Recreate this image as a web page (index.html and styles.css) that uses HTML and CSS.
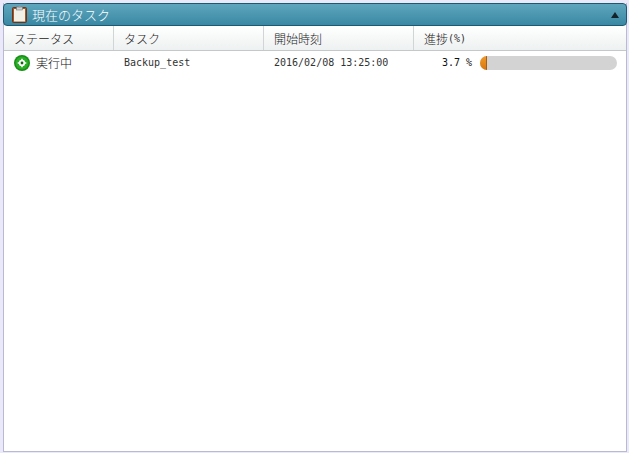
FILE: index.html
```html
<!DOCTYPE html>
<html lang="ja">
<head>
<meta charset="utf-8">
<title>現在のタスク</title>
<link rel="stylesheet" href="styles.css">
</head>
<body>
<div class="panel">
  <div class="titlebar">
    <svg class="clip" width="15" height="17" viewBox="0 0 15 17">
      <rect x="0.5" y="1.5" width="14" height="15" rx="1" fill="#a0582c" stroke="#6b3518"/>
      <rect x="2" y="3" width="11" height="12.5" fill="#f2f1e8"/>
      <rect x="4.5" y="1" width="6" height="3" fill="#cfd2d2" stroke="#666" stroke-width="0.5"/>
      <rect x="6.5" y="0" width="2" height="1.5" fill="#999"/>
    </svg>
    <span class="title">現在のタスク</span>
    <span class="collapse"></span>
  </div>
  <div class="head">
    <div class="hcell c1">ステータス</div>
    <div class="hcell c2">タスク</div>
    <div class="hcell c3">開始時刻</div>
    <div class="hcell c4">進捗<span class="mono">(%)</span></div>
  </div>
  <div class="row">
    <div class="cell c1 status">
      <svg width="16" height="16" viewBox="0 0 16 16">
        <circle cx="8" cy="8" r="8" fill="#178f17"/>
        <circle cx="8" cy="8" r="6.5" fill="#2aae25"/>
        <circle cx="8" cy="8" r="3.1" fill="#fff"/>
        <path d="M7.2 3.7h1.6v8.6H7.2zM3.7 7.2h8.6v1.6H3.7z" fill="#fff"/>
        <path d="M5.1 6.2l1.1-1.1 4.7 4.7-1.1 1.1zM9.8 5.1l1.1 1.1-4.7 4.7-1.1-1.1z" fill="#fff"/>
        <circle cx="8" cy="8" r="1.4" fill="#0f6a0f"/>
      </svg>
      <span>実行中</span>
    </div>
    <div class="cell c2 mono">Backup_test</div>
    <div class="cell c3 mono">2016/02/08 13:25:00</div>
    <div class="cell c4 progress">
      <span class="mono pct">3.7 %</span>
      <div class="track"><div class="fill" style="width:3.7%"></div></div>
    </div>
  </div>
</div>
</body>
</html>
```
FILE: styles.css
```css
* { box-sizing: border-box; }
html, body { height: 100%; }
body {
  margin: 0;
  padding: 3px 2px 1px 3px;
  background: #e9e9fa;
  font-family: "Noto Sans CJK JP", "DejaVu Sans", sans-serif;
  overflow: hidden;
}
.panel {
  height: 449px;
  display: flex;
  flex-direction: column;
  background: #fff;
  border: 1px solid #b9b9d6;
  border-top: 0;
}
.titlebar {
  height: 23px;
  flex: none;
  margin: 0 -1px;
  display: flex;
  align-items: center;
  padding: 0 7px 0 8px;
  background: linear-gradient(#5fa6bd, #3a88a4);
  border: 1px solid #1d5a72;
  border-radius: 4px;
}
.clip { flex: none; margin-right: 5px; }
.title { font-size: 13px; line-height: 18px; font-weight: 300; color: #fff; flex: 1; }
.collapse {
  width: 0;
  height: 0;
  border-left: 4px solid transparent;
  border-right: 4px solid transparent;
  border-bottom: 6px solid #12232b;
}
.head {
  height: 25px;
  flex: none;
  display: flex;
  background: linear-gradient(#fff, #eef1f1);
  border-bottom: 1px solid #c4c8c8;
}
.hcell {
  display: flex;
  align-items: center;
  padding-left: 10px;
  font-size: 12px;
  font-weight: 300;
  color: #222;
  border-right: 1px solid #d2d5d5;
}
.hcell.c4 { border-right: 0; }
.c1 { width: 110px; }
.c2 { width: 150px; }
.c3 { width: 150px; }
.c4 { flex: 1; }
.row { height: 23px; flex: none; display: flex; }
.cell {
  display: flex;
  align-items: center;
  padding-left: 10px;
  font-size: 12px;
  font-weight: 300;
  color: #111;
}
.mono { font-family: "DejaVu Sans Mono", monospace; font-size: 10px; font-weight: 400; color: #333; }
.status { gap: 6px; }
.progress { padding: 0 9px 0 0; }
.pct { width: 58px; text-align: right; color: #111; flex: none; }
.track {
  flex: 1;
  height: 14px;
  margin-left: 8px;
  background: #d3d3d3;
  border-radius: 7px;
  overflow: hidden;
}
.fill {
  height: 100%;
  min-width: 7px;
  background: linear-gradient(#f09a2a, #d9760f);
  border-right: 1px solid #a85d10;
}
```
